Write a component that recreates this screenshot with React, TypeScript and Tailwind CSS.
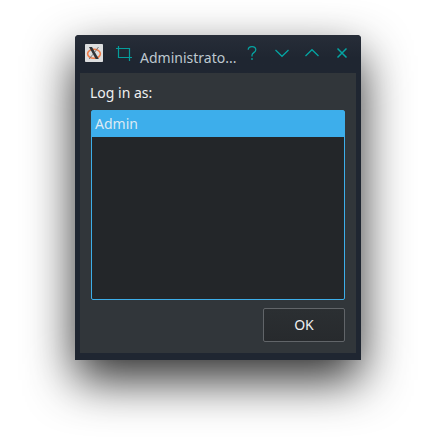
import React from 'react';

function AppIcon() {
  return (
    <svg width="18" height="18" viewBox="0 0 18 18" className="shrink-0">
      <rect width="18" height="18" rx="0.8" fill="#dddedf" />
      <ellipse cx="9" cy="9.8" rx="6.400" ry="4.500" fill="none" stroke="#f07c48" strokeWidth="1.600" />
      <path d="M4 3h3l6.800 12h-3.100z" fill="#303438" />
      <path d="M13.500 3 9.700 8.200M8 10.200 4.200 15" stroke="#6a6e71" strokeWidth="0.900" />
    </svg>
  );
}

function CropIcon() {
  return (
    <svg width="16" height="15" viewBox="0 0 16 15" className="shrink-0" fill="none" stroke="#059d9b" strokeWidth="1.2">
      <path d="M2.5 0v11.500H16M0 2.500h13.500V15" />
    </svg>
  );
}

function TitleButton({ children }: { children: React.ReactNode }) {
  return (
    <button className="flex h-[30px] w-[30px] items-center justify-center">
      <svg width="18" height="18" viewBox="0 0 18 18" fill="none" stroke="#05a5a3" strokeWidth="1.25">
        {children}
      </svg>
    </button>
  );
}

export default function App() {
  return (
    <div className="h-[445px] w-[436px] overflow-hidden bg-white pt-[35px] pl-[75px] font-['Noto_Sans',sans-serif] text-[14px] leading-[20px]">
      <div className="flex h-[325px] w-[286px] flex-col rounded-t-[4px] bg-[#1f2631] px-[5px] pb-[7px] shadow-[0_20px_48px_rgba(0,0,0,0.82)]">
        <div className="-mx-[5px] flex h-[38px] shrink-0 items-start rounded-t-[4px] bg-linear-to-b from-[#272d38] to-[#1f2631] to-60% pl-[10px]">
          <div className="pt-[9px]"><AppIcon /></div>
          <div className="ml-[13px] pt-[11px]"><CropIcon /></div>
          <div className="ml-[8px] w-[97px] pt-[13px] whitespace-nowrap text-[#bec8cf]">Administrato...</div>
          <div className="flex pt-[3px]">
            <TitleButton>
              <path d="M5.2 5.8C5.2 3.600 6.600 2.500 9 2.500s3.800 1.100 3.800 3.200c0 3.100-3.800 2.700-3.800 5.500v1.300M9 14v2" />
            </TitleButton>
            <TitleButton><path d="m2.500 6 6.500 6.300L15.500 6" /></TitleButton>
            <TitleButton><path d="m2.500 12 6.500-6.300 6.500 6.300" /></TitleButton>
            <TitleButton><path d="m4.500 4.500 9 9m0-9-9 9" strokeWidth="1.500" /></TitleButton>
          </div>
        </div>
        <main className="flex h-[280px] w-[276px] flex-col bg-[#31363a] pt-[10px] pr-[11px] pl-[11px]">
          <label className="-ml-px h-[27px] text-[#eff0f1]">Log in as:</label>
          <div className="h-[190px] shrink-0 rounded-[2px] border border-[#3daee9] bg-[#232629]">
            <div className="h-[26px] bg-[#3daeeb] pt-[3px] pl-[3px] text-[#dceaf4]">Admin</div>
          </div>
          <button className="mt-[8px] flex h-[34px] w-[82px] shrink-0 items-center justify-center self-end rounded-[2px] border border-[#616569] bg-linear-to-b from-[#2b2f32] to-[#272a2d] text-[#eff0f1]">OK</button>
        </main>
      </div>
    </div>
  );
}
